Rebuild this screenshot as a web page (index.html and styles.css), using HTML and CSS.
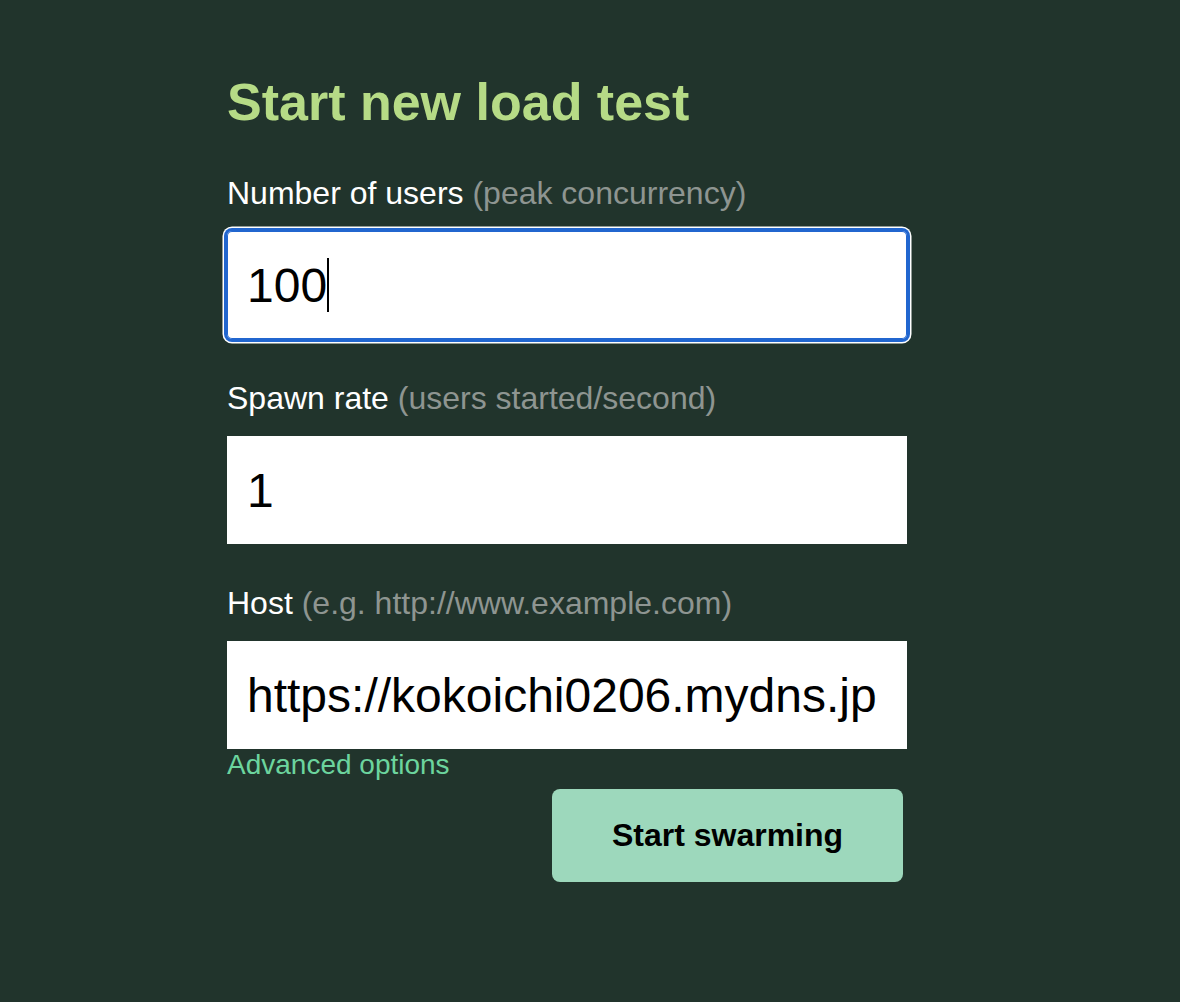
FILE: index.html
```html
<!DOCTYPE html>
<html lang="en">
<head>
<meta charset="utf-8">
<title>Start new load test</title>
<link rel="stylesheet" href="styles.css">
</head>
<body>
<main class="panel">
  <h1 class="title">Start new load test</h1>
  <form class="form">
    <label class="label">Number of users <span class="hint">(peak concurrency)</span></label>
    <div class="field focused" role="textbox">100<span class="caret"></span></div>

    <label class="label">Spawn rate <span class="hint">(users started/second)</span></label>
    <div class="field" role="textbox">1</div>

    <label class="label">Host <span class="hint">(e.g. http://www.example.com)</span></label>
    <div class="field field-last" role="textbox">https://kokoichi0206.mydns.jp</div>

    <a class="advanced">Advanced options</a>
    <div class="actions">
      <button type="button" class="btn">Start swarming</button>
    </div>
  </form>
</main>
</body>
</html>
```
FILE: styles.css
```css
html, body {
  margin: 0;
  padding: 0;
  background: #21342c;
  height: 100%;
}
body {
  font-family: "Liberation Sans", Arial, Helvetica, sans-serif;
}
.panel {
  width: 680px;
  margin-left: 227px;
  padding-top: 72px;
}
.title {
  margin: 0;
  font-size: 52px;
  line-height: 60px;
  font-weight: 700;
  color: #b6db86;
}
.form {
  display: flex;
  flex-direction: column;
  margin-top: 41px;
}
.label {
  display: block;
  font-size: 32px;
  line-height: 40px;
  color: #ffffff;
  margin-bottom: 18px;
}
.hint {
  color: #8e9591;
}
.field {
  box-sizing: border-box;
  height: 108px;
  background: #ffffff;
  color: #000000;
  font-size: 48px;
  padding-left: 20px;
  display: flex;
  align-items: center;
  margin-bottom: 39px;
}
.field-last {
  margin-bottom: 0;
}
.focused {
  border-radius: 5px;
  box-shadow: inset 0 0 0 1px #2166cf, 0 0 0 3px #2166cf, 0 0 0 4.5px #ffffff;
}
.caret {
  display: inline-block;
  width: 2px;
  height: 54px;
  background: #000;
  margin-left: 0;
}
.advanced {
  display: block;
  font-size: 28px;
  line-height: 32px;
  color: #6cd49e;
  cursor: pointer;
}
.actions {
  display: flex;
  justify-content: flex-end;
  padding-right: 4px;
  margin-top: 8px;
}
.btn {
  width: 351px;
  height: 93px;
  border: none;
  border-radius: 8px;
  background: #9dd8bc;
  color: #000;
  font-family: "Liberation Sans", Arial, Helvetica, sans-serif;
  font-size: 32px;
  font-weight: 700;
  cursor: pointer;
}
```
